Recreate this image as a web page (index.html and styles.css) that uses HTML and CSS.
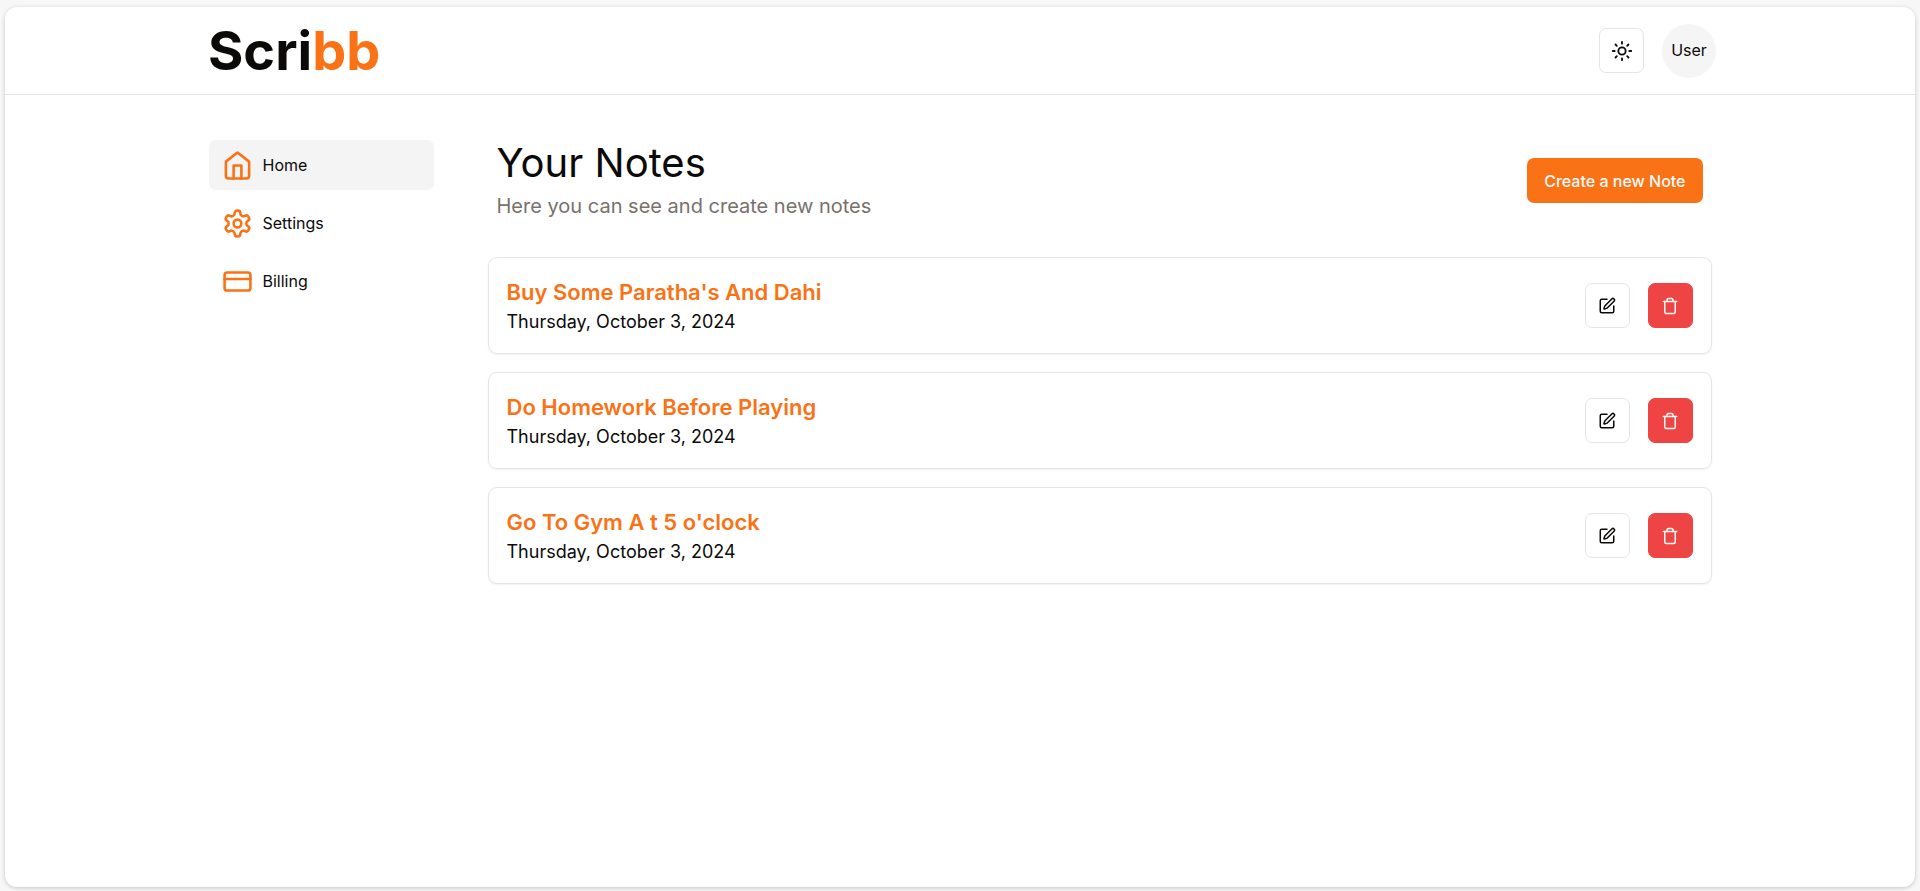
FILE: index.html
```
<!DOCTYPE html>
<html lang="en">
<head>
    <meta charset="UTF-8">
    <meta name="viewport" content="width=device-width, initial-scale=1.0">
    <title>Scribb</title>
    <link rel="stylesheet" href="styles.css">
</head>
<body>
    <!-- icons shared by the note rows -->
    <svg class="sprite" aria-hidden="true">
        <symbol id="icon-edit" viewBox="0 0 24 24">
            <path d="M12 3H5a2 2 0 0 0-2 2v14a2 2 0 0 0 2 2h14a2 2 0 0 0 2-2v-7"/>
            <path d="M18.375 2.625a1 1 0 0 1 3 3l-9.013 9.014a2 2 0 0 1-.853.505l-2.873.84a.5.5 0 0 1-.62-.62l.84-2.873a2 2 0 0 1 .506-.852z"/>
        </symbol>
        <symbol id="icon-trash" viewBox="0 0 24 24">
            <path d="M3 6h18"/>
            <path d="M19 6v14c0 1-1 2-2 2H7c-1 0-2-1-2-2V6"/>
            <path d="M8 6V4c0-1 1-2 2-2h4c1 0 2 1 2 2v2"/>
        </symbol>
    </svg>

    <div class="app">
        <header class="navbar">
            <div class="navbar-inner">
                <a class="logo" href="#">Scri<span>bb</span></a>
                <div class="navbar-actions">
                    <button class="icon-button" aria-label="Toggle theme">
                        <svg class="icon" viewBox="0 0 24 24">
                            <circle cx="12" cy="12" r="4"/>
                            <path d="M12 2v2M12 20v2M4.93 4.93l1.41 1.41M17.66 17.66l1.41 1.41M2 12h2M20 12h2M6.34 17.66l-1.41 1.41M19.07 4.93l-1.41 1.41"/>
                        </svg>
                    </button>
                    <button class="avatar">User</button>
                </div>
            </div>
        </header>

        <div class="layout">
            <nav class="sidebar">
                <a class="active" href="#">
                    <svg class="icon" viewBox="0 0 24 24">
                        <path d="m3 9 9-7 9 7v11a2 2 0 0 1-2 2H5a2 2 0 0 1-2-2z"/>
                        <path d="M9 22V12h6v10"/>
                    </svg>
                    Home
                </a>
                <a href="#">
                    <svg class="icon" viewBox="0 0 24 24">
                        <path d="M12.22 2h-.44a2 2 0 0 0-2 2v.18a2 2 0 0 1-1 1.73l-.43.25a2 2 0 0 1-2 0l-.15-.08a2 2 0 0 0-2.73.73l-.22.38a2 2 0 0 0 .73 2.73l.15.1a2 2 0 0 1 1 1.72v.51a2 2 0 0 1-1 1.74l-.15.09a2 2 0 0 0-.73 2.73l.22.38a2 2 0 0 0 2.73.73l.15-.08a2 2 0 0 1 2 0l.43.25a2 2 0 0 1 1 1.73V20a2 2 0 0 0 2 2h.44a2 2 0 0 0 2-2v-.18a2 2 0 0 1 1-1.73l.43-.25a2 2 0 0 1 2 0l.15.08a2 2 0 0 0 2.73-.73l.22-.39a2 2 0 0 0-.73-2.73l-.15-.08a2 2 0 0 1-1-1.74v-.5a2 2 0 0 1 1-1.74l.15-.09a2 2 0 0 0 .73-2.73l-.22-.38a2 2 0 0 0-2.73-.73l-.15.08a2 2 0 0 1-2 0l-.43-.25a2 2 0 0 1-1-1.73V4a2 2 0 0 0-2-2z"/>
                        <circle cx="12" cy="12" r="3"/>
                    </svg>
                    Settings
                </a>
                <a href="#">
                    <svg class="icon" viewBox="0 0 24 24">
                        <rect x="2" y="5" width="20" height="14" rx="2"/>
                        <path d="M2 10h20"/>
                    </svg>
                    Billing
                </a>
            </nav>

            <main>
                <div class="page-header">
                    <div>
                        <h1>Your Notes</h1>
                        <p>Here you can see and create new notes</p>
                    </div>
                    <button class="create-button">Create a new Note</button>
                </div>

                <div class="notes">
                    <article class="note">
                        <div>
                            <h2>Buy Some Paratha's And Dahi</h2>
                            <p>Thursday, October 3, 2024</p>
                        </div>
                        <div class="note-actions">
                            <button class="icon-button" aria-label="Edit note"><svg class="icon"><use href="#icon-edit"/></svg></button>
                            <button class="icon-button delete" aria-label="Delete note"><svg class="icon"><use href="#icon-trash"/></svg></button>
                        </div>
                    </article>
                    <article class="note">
                        <div>
                            <h2>Do Homework Before Playing</h2>
                            <p>Thursday, October 3, 2024</p>
                        </div>
                        <div class="note-actions">
                            <button class="icon-button" aria-label="Edit note"><svg class="icon"><use href="#icon-edit"/></svg></button>
                            <button class="icon-button delete" aria-label="Delete note"><svg class="icon"><use href="#icon-trash"/></svg></button>
                        </div>
                    </article>
                    <article class="note">
                        <div>
                            <h2>Go To Gym A t 5 o'clock</h2>
                            <p>Thursday, October 3, 2024</p>
                        </div>
                        <div class="note-actions">
                            <button class="icon-button" aria-label="Edit note"><svg class="icon"><use href="#icon-edit"/></svg></button>
                            <button class="icon-button delete" aria-label="Delete note"><svg class="icon"><use href="#icon-trash"/></svg></button>
                        </div>
                    </article>
                </div>
            </main>
        </div>
    </div>
</body>
</html>
```
FILE: styles.css
```
* {
    box-sizing: border-box;
}
body {
    margin: 0;
    padding: 7px 5px 4px;
    min-height: 100vh;
    display: flex;
    background: #f7f7f7;
    color: #0c0a09;
    font-family: Inter, sans-serif;
    font-size: 16px;
    line-height: 24px;
}
h1, h2, p {
    margin: 0;
}
a {
    color: inherit;
    text-decoration: none;
}
button {
    font: inherit;
    color: inherit;
    border: none;
    padding: 0;
    cursor: pointer;
}
.sprite {
    display: none;
}
.icon {
    width: 18px;
    height: 18px;
    flex-shrink: 0;
    fill: none;
    stroke: currentColor;
    stroke-width: 2;
    stroke-linecap: round;
    stroke-linejoin: round;
}
.app {
    flex: 1;
    background: #fff;
    border-radius: 12px;
    box-shadow: 0 1px 4px rgba(0, 0, 0, 0.2);
}

/* top bar */
.navbar {
    border-bottom: 1px solid #e5e5e5;
}
.navbar-inner {
    max-width: 1512px;
    height: 87px;
    margin: 0 auto;
    display: flex;
    align-items: center;
    justify-content: space-between;
}
.logo {
    padding-left: 4px;
    font-size: 54px;
    line-height: 54px;
    font-weight: 700;
}
.logo span {
    color: #f97316;
}
.navbar-actions {
    display: flex;
    align-items: center;
    gap: 18px;
}
.icon-button {
    width: 45px;
    height: 45px;
    display: flex;
    align-items: center;
    justify-content: center;
    background: #fff;
    border: 1px solid #e5e5e5;
    border-radius: 7px;
}
.navbar .icon {
    width: 22px;
    height: 22px;
}
.avatar {
    width: 54px;
    height: 54px;
    padding-bottom: 2px;
    border-radius: 50%;
    background: #f5f5f5;
}

/* page body */
.layout {
    max-width: 1503px;
    margin: 0 auto;
    padding: 45px 0;
    display: grid;
    grid-template-columns: 225px 1fr;
    gap: 54px;
}
.sidebar {
    display: flex;
    flex-direction: column;
    gap: 8px;
}
.sidebar a {
    display: flex;
    align-items: center;
    gap: 10px;
    height: 50px;
    padding: 0 13px;
    border-radius: 7px;
}
.sidebar .active {
    background: #f4f4f4;
}
.sidebar .icon {
    width: 31px;
    height: 31px;
    color: #f97316;
}
.page-header {
    display: flex;
    align-items: center;
    justify-content: space-between;
    padding: 0 9px;
    margin-bottom: 36px;
}
.page-header h1 {
    font-size: 40px;
    line-height: 45px;
    font-weight: 400;
}
.page-header p {
    margin-top: 7px;
    color: #78716c;
    font-size: 20px;
    line-height: 29px;
}
.create-button {
    height: 45px;
    padding: 0 17px;
    border-radius: 7px;
    background: #f97316;
    color: #fafaf9;
    font-weight: 500;
}
.notes {
    display: flex;
    flex-direction: column;
    gap: 18px;
}
.note {
    display: flex;
    align-items: center;
    justify-content: space-between;
    padding: 18px;
    min-height: 97px;
    border: 1px solid #e5e5e5;
    border-radius: 9px;
    box-shadow: 0 1px 2px rgba(0, 0, 0, 0.06);
}
.note h2 {
    color: #f97316;
    font-size: 22px;
    line-height: 32px;
    font-weight: 600;
}
.note p {
    font-size: 18px;
    line-height: 27px;
}
.note-actions {
    display: flex;
    gap: 18px;
}
.note .delete {
    background: #ef4444;
    border-color: #ef4444;
    color: #fafaf9;
}
```
